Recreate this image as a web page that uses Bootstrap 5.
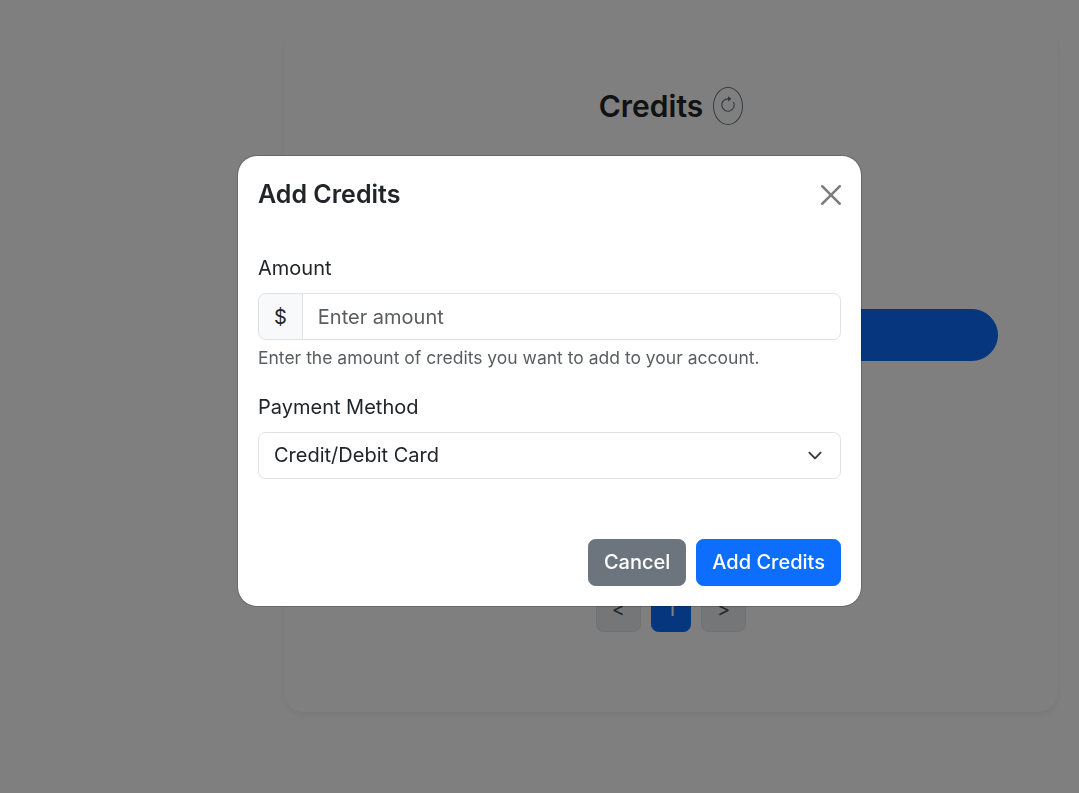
<!DOCTYPE html>
<html lang="en">
<head>
<meta charset="utf-8">
<meta name="viewport" content="width=device-width, initial-scale=1">
<title>Credits</title>
<link href="https://cdn.jsdelivr.net/npm/bootstrap@5.3.0/dist/css/bootstrap.min.css" rel="stylesheet">
<style>
  html { font-size: 20px; }
  body { font-family: Inter, "Liberation Sans", sans-serif; background: #fff; overflow: hidden; }
  .side-space { width: 264px; flex: none; }
  .page-main { padding: 27px 21px 20px 20px; min-width: 0; }
  .credits-card { border-radius: 20px; padding: 60px; box-shadow: 0 3px 6px rgba(0, 0, 0, .06); }
  .credits-title { font-size: 30px; line-height: 38px; font-weight: 600; }
  .refresh-btn { width: 30px; height: 38px; padding: 0 0 2px; border-radius: 50%; border: 1px solid #6c757d; background: none; color: #6c757d; }
  .balance-area { min-height: 184px; }
  .history-area { min-height: 224px; }
  .wide-btn { height: 52px; }
  .pager { gap: 10px; }
  .pager .btn-step { background: #e9ecef; border-color: #dee2e6; color: #495057; }
  .modal { padding: 0 0 31px 20px; }
  .modal-dialog { --bs-modal-width: 625px; max-width: 625px; }
  .modal-content { border-radius: 20px; }
  .modal-title { font-size: 25px; line-height: 37px; font-weight: 600; }
  .form-select { background-size: 20px 15px; }
  .modal-footer .btn { font-weight: 500; }
</style>
</head>
<body class="modal-open">
<div class="d-flex">
  <div class="side-space"></div>
  <main class="page-main flex-grow-1">
    <section class="credits-card">
      <div class="d-flex justify-content-center align-items-center gap-2">
        <h1 class="credits-title mb-0">Credits</h1>
        <button type="button" class="refresh-btn d-flex align-items-center justify-content-center" aria-label="Refresh">
          <svg class="flex-shrink-0" width="18" height="18" viewBox="0 0 16 16" fill="currentColor" aria-hidden="true">
            <path fill-rule="evenodd" d="M8 3a5 5 0 1 0 4.546 2.914.5.5 0 0 1 .908-.417A6 6 0 1 1 8 2z"/>
            <path d="M8 4.466V.534a.25.25 0 0 1 .41-.192l2.36 1.966c.12.1.12.284 0 .384L8.41 4.658A.25.25 0 0 1 8 4.466"/>
          </svg>
        </button>
      </div>
      <div class="balance-area"></div>
      <button type="button" class="btn btn-primary rounded-pill w-100 d-block wide-btn" aria-label="Open add credits"></button>
      <div class="history-area"></div>
      <nav class="pager d-flex justify-content-center mb-3" aria-label="Pages">
        <button type="button" class="btn btn-step">&lt;</button>
        <button type="button" class="btn btn-primary">1</button>
        <button type="button" class="btn btn-step">&gt;</button>
      </nav>
    </section>
  </main>
</div>

<div class="modal-backdrop show"></div>
<div class="modal show d-block" tabindex="-1" role="dialog" aria-modal="true" aria-labelledby="addTitle">
  <div class="modal-dialog modal-dialog-centered">
    <form class="modal-content">
      <div class="modal-header border-0">
        <h2 class="modal-title" id="addTitle">Add Credits</h2>
        <button type="button" class="btn-close" aria-label="Close"></button>
      </div>
      <div class="modal-body">
        <div class="mb-3">
          <label class="form-label" for="amount">Amount</label>
          <div class="input-group">
            <span class="input-group-text bg-light">$</span>
            <input type="text" inputmode="decimal" class="form-control" id="amount" placeholder="Enter amount" aria-describedby="amountHelp">
          </div>
          <div class="form-text" id="amountHelp">Enter the amount of credits you want to add to your account.</div>
        </div>
        <div class="mb-3">
          <label class="form-label" for="method">Payment Method</label>
          <select class="form-select" id="method">
            <option selected>Credit/Debit Card</option>
          </select>
        </div>
      </div>
      <div class="modal-footer border-0">
        <button type="button" class="btn btn-secondary">Cancel</button>
        <button type="submit" class="btn btn-primary">Add Credits</button>
      </div>
    </form>
  </div>
</div>
<script src="https://cdn.jsdelivr.net/npm/bootstrap@5.3.0/dist/js/bootstrap.bundle.min.js"></script>
</body>
</html>
